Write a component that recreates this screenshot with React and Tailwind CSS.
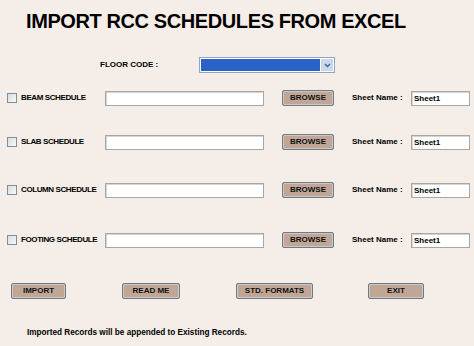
import React from 'react';

const rows = [
  { label: 'BEAM SCHEDULE', mt: 'mt-[17px]' },
  { label: 'SLAB SCHEDULE', mt: 'mt-[28px]' },
  { label: 'COLUMN SCHEDULE', mt: 'mt-[32px]' },
  { label: 'FOOTING SCHEDULE', mt: 'mt-[34px]' },
];

function Btn({ children, className = '' }) {
  return (
    <button
      className={`h-[16px] rounded-[2px] border border-[#6a7b8e] bg-[#bfa696] shadow-[inset_0_0_0_1px_#d6c6ba] text-[8px] font-bold leading-none text-[#111] ${className}`}
    >
      {children}
    </button>
  );
}

function Field({ className = '', value = '' }) {
  return (
    <div
      className={`h-[15px] border border-[#a7a7a7] bg-white shadow-[inset_1px_1px_0_#d4d4d4] text-[8px] font-bold leading-[13px] pl-[2px] text-black ${className}`}
    >
      {value}
    </div>
  );
}

export default function App() {
  return (
    <div
      className="w-[474px] h-[346px] bg-[#f5ede7] text-black overflow-hidden"
      style={{ fontFamily: '"Liberation Sans", Arial, sans-serif' }}
    >
      <div className="pt-[9px] pl-[26px] text-[20px] font-bold leading-[24px] tracking-[-0.4px]">
        IMPORT RCC SCHEDULES FROM EXCEL
      </div>

      <div className="mt-[24px] flex items-center h-[16px]">
        <span className="ml-[100px] w-[99px] text-[8px] font-bold">FLOOR CODE :</span>
        <div className="flex w-[136px] h-[16px] border border-[#8fa6c0] bg-white p-[1px]">
          <div className="flex-1 bg-[#2a62c6]" />
          <div className="w-[12px] ml-[1px] bg-[#c9d8ee] flex items-center justify-center">
            <svg width="7" height="5" viewBox="0 0 7 5">
              <path d="M1 1 L3.5 3.5 L6 1" fill="none" stroke="#4d6185" strokeWidth="1.3" />
            </svg>
          </div>
        </div>
      </div>

      {rows.map((r) => (
        <div key={r.label} className={`flex items-center h-[16px] ${r.mt}`}>
          <div className="ml-[7px] w-[10px] h-[10px] border border-[#7f8e9c] bg-gradient-to-br from-[#dcdcdc] to-[#f8f8f8]" />
          <span className="ml-[4px] w-[84px] text-[8px] font-bold tracking-[-0.4px] whitespace-nowrap">{r.label}</span>
          <Field className="w-[159px]" />
          <Btn className="ml-[18px] w-[52px]">BROWSE</Btn>
          <span className="ml-[18px] w-[59px] text-[8px] font-bold whitespace-nowrap">Sheet Name :</span>
          <Field className="w-[59px]" value="Sheet1" />
        </div>
      ))}

      <div className="mt-[35px] flex items-center">
        <Btn className="ml-[11px] w-[55px]">IMPORT</Btn>
        <Btn className="ml-[56px] w-[58px]">READ ME</Btn>
        <Btn className="ml-[56px] w-[77px]">STD. FORMATS</Btn>
        <Btn className="ml-[55px] w-[56px]">EXIT</Btn>
      </div>

      <div className="mt-[28px] ml-[27px] text-[8.2px] font-bold">
        Imported Records will be appended to Existing Records.
      </div>
    </div>
  );
}
